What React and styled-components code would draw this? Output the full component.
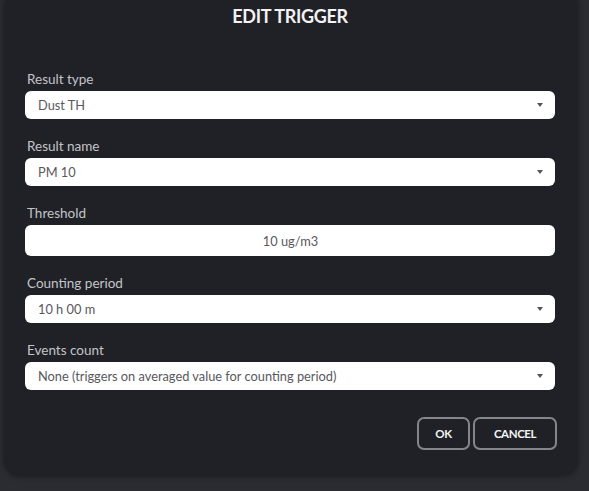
import React from "react";
import styled, { createGlobalStyle } from "styled-components";

const GlobalStyle = createGlobalStyle`
  html, body {
    margin: 0;
    padding: 0;
    background: #2a2c32;
    font-family: Lato, "Open Sans", sans-serif;
  }
`;

const fields = [
  { label: "Result type", value: "Dust TH", select: true },
  { label: "Result name", value: "PM 10", select: true },
  { label: "Threshold", value: "10 ug/m3", select: false },
  { label: "Counting period", value: "10 h 00 m", select: true },
  {
    label: "Events count",
    value: "None (triggers on averaged value for counting period)",
    select: true,
  },
];

const App = () => {
  return (
    <>
      <GlobalStyle />
      <Page>
        <Dialog>
          <Title>EDIT TRIGGER</Title>
          <Form>
            {fields.map((f) => (
              <Field key={f.label}>
                <Label>{f.label}</Label>
                <Input $centered={!f.select} $tall={!f.select}>
                  <Value>{f.value}</Value>
                  {f.select && <Arrow />}
                </Input>
              </Field>
            ))}
          </Form>
          <Actions>
            <Button $width={53}>OK</Button>
            <Button $width={84}>CANCEL</Button>
          </Actions>
        </Dialog>
      </Page>
    </>
  );
};

const Page = styled.div`
  width: 589px;
  height: 491px;
  overflow: hidden;
`;

const Dialog = styled.div`
  width: 572px;
  margin-left: 5px;
  box-sizing: border-box;
  padding: 0 22px 25px 20px;
  background: #1f2127;
  border-radius: 0 0 14px 14px;
  box-shadow: 0 0 6px rgba(0, 0, 0, 0.55);
`;

const Title = styled.div`
  padding-top: 5px;
  height: 23px;
  line-height: 22px;
  text-align: center;
  color: #f2f2f2;
  font-size: 18px;
  font-weight: 700;
  letter-spacing: -0.3px;
`;

const Form = styled.div`
  display: flex;
  flex-direction: column;
  gap: 18px;
  padding-top: 42px;
`;

const Field = styled.div`
  display: flex;
  flex-direction: column;
  gap: 3px;
`;

const Label = styled.div`
  height: 18px;
  line-height: 18px;
  padding-left: 2px;
  font-size: 13.5px;
  color: #c4c4c8;
`;

const Input = styled.div`
  height: ${(p) => (p.$tall ? 31 : 28)}px;
  box-sizing: border-box;
  background: #ffffff;
  border-radius: 6px;
  display: flex;
  align-items: center;
  justify-content: ${(p) => (p.$centered ? "center" : "space-between")};
  padding: 0 12px 0 13px;
`;

const Value = styled.span`
  font-size: 12.8px;
  color: #58585d;
`;

const Arrow = styled.span`
  width: 0;
  height: 0;
  border-left: 3px solid transparent;
  border-right: 3px solid transparent;
  border-top: 4px solid #555;
`;

const Actions = styled.div`
  display: flex;
  justify-content: flex-end;
  gap: 3px;
  margin-top: 27px;
  margin-right: -2px;
`;

const Button = styled.button`
  width: ${(p) => p.$width}px;
  height: 33px;
  background: #1f2127;
  border: 2px solid #85868a;
  border-radius: 7px;
  color: #f4f4f4;
  font-family: Lato, "Open Sans", sans-serif;
  font-size: 11.5px;
  font-weight: 700;
  letter-spacing: -0.4px;
  padding: 0;
`;

export default App;
